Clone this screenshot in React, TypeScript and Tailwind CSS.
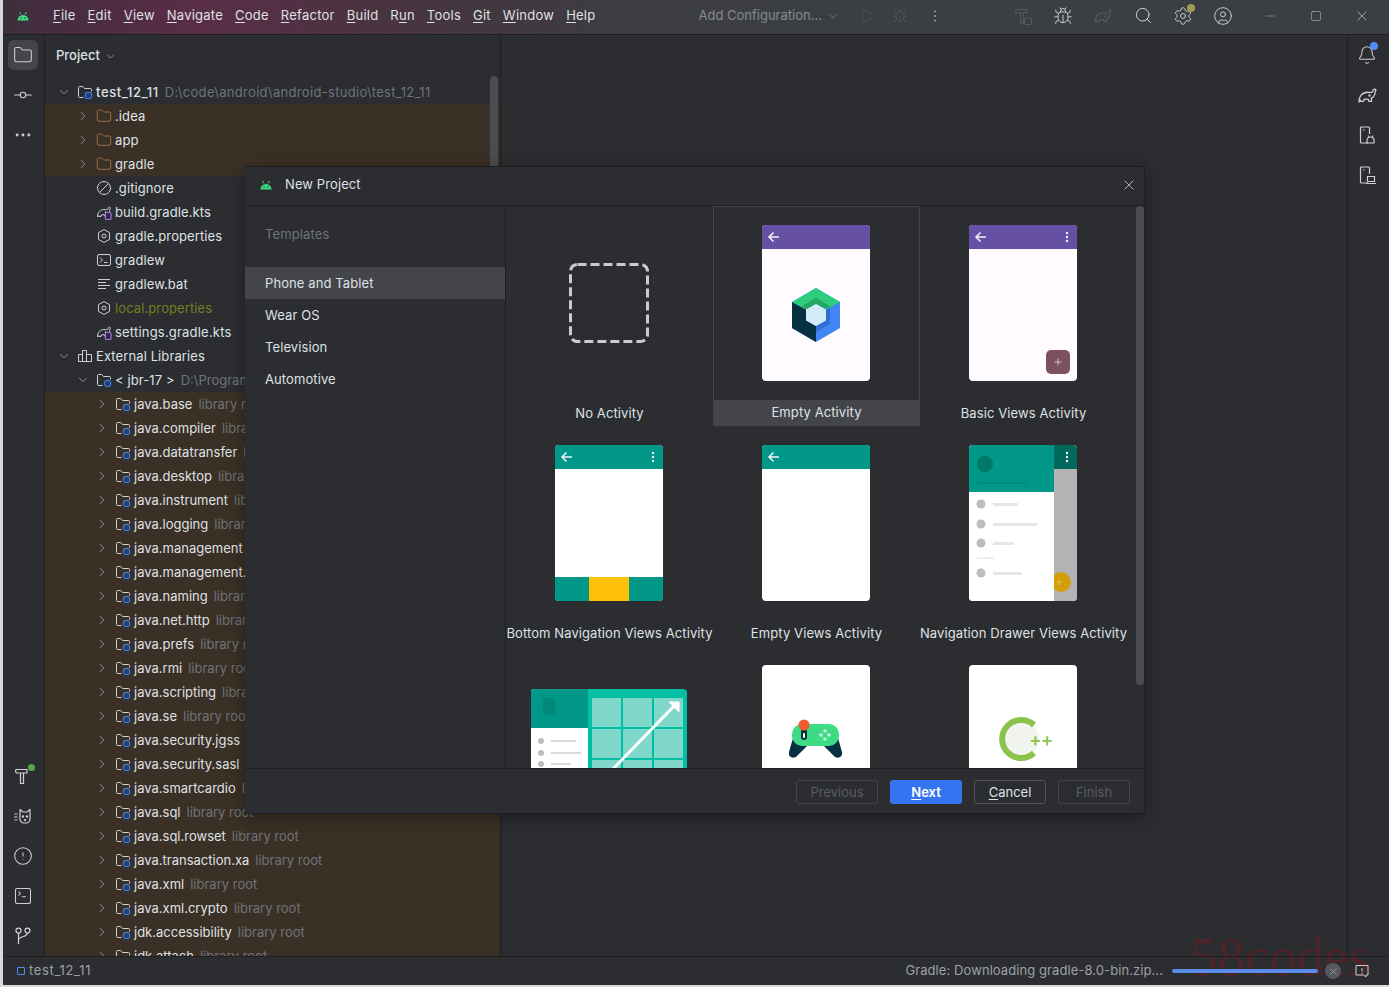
import type { ReactNode } from 'react';
import {
  Bell,
  Bug,
  ChevronDown,
  ChevronRight,
  CircleAlert,
  CircleUser,
  Ellipsis,
  EllipsisVertical,
  Folder,
  GitCommitHorizontal,
  Minus,
  Play,
  Search,
  Settings,
  Square,
  SquareTerminal,
  X,
} from 'lucide-react';

type IconKind =
  | 'module'
  | 'folder'
  | 'ignore'
  | 'gradle'
  | 'props'
  | 'shell'
  | 'text'
  | 'libs'
  | 'lib';

interface TreeRow {
  name: string;
  hint?: string;
  level: number;
  icon: IconKind;
  arrow?: 'open' | 'closed';
  tint?: boolean;
  nameClass?: string;
  hintClass?: string;
}

const lib = (name: string): TreeRow => ({
  name,
  hint: 'library root',
  level: 2,
  icon: 'lib',
  arrow: 'closed',
  tint: true,
  nameClass: 'text-[#dfe1e5]',
});

const plain = 'tracking-[0.1px] text-[#dfe1e5]';

const rows: TreeRow[] = [
  {
    name: 'test_12_11',
    hint: 'D:\\code\\android\\android-studio\\test_12_11',
    level: 0,
    icon: 'module',
    arrow: 'open',
    nameClass: 'font-medium tracking-[0.6px] text-[#dfe1e5]',
    hintClass: 'tracking-[0.32px]',
  },
  { name: '.idea', level: 1, icon: 'folder', arrow: 'closed', tint: true, nameClass: plain },
  { name: 'app', level: 1, icon: 'folder', arrow: 'closed', tint: true, nameClass: plain },
  { name: 'gradle', level: 1, icon: 'folder', arrow: 'closed', tint: true, nameClass: plain },
  { name: '.gitignore', level: 1, icon: 'ignore', nameClass: plain },
  { name: 'build.gradle.kts', level: 1, icon: 'gradle', nameClass: plain },
  { name: 'gradle.properties', level: 1, icon: 'props', nameClass: plain },
  { name: 'gradlew', level: 1, icon: 'shell', nameClass: plain },
  { name: 'gradlew.bat', level: 1, icon: 'text', nameClass: plain },
  { name: 'local.properties', level: 1, icon: 'props', nameClass: 'tracking-[0.1px] text-[#737f22]' },
  { name: 'settings.gradle.kts', level: 1, icon: 'gradle', nameClass: 'tracking-[0.2px] text-[#dfe1e5]' },
  { name: 'External Libraries', level: 0, icon: 'libs', arrow: 'open', nameClass: plain },
  { name: '< jbr-17 >', hint: 'D:\\Program Files\\Android', level: 1, icon: 'lib', arrow: 'open', nameClass: plain },
  ...[
    'java.base',
    'java.compiler',
    'java.datatransfer',
    'java.desktop',
    'java.instrument',
    'java.logging',
    'java.management',
    'java.management.rmi',
    'java.naming',
    'java.net.http',
    'java.prefs',
    'java.rmi',
    'java.scripting',
    'java.se',
    'java.security.jgss',
    'java.security.sasl',
    'java.smartcardio',
    'java.sql',
    'java.sql.rowset',
    'java.transaction.xa',
    'java.xml',
    'java.xml.crypto',
    'jdk.accessibility',
    'jdk.attach',
  ].map(lib),
];

const menu = [
  ['', 'F', 'ile'],
  ['', 'E', 'dit'],
  ['', 'V', 'iew'],
  ['', 'N', 'avigate'],
  ['', 'C', 'ode'],
  ['', 'R', 'efactor'],
  ['', 'B', 'uild'],
  ['R', 'u', 'n'],
  ['', 'T', 'ools'],
  ['', 'G', 'it'],
  ['', 'W', 'indow'],
  ['', 'H', 'elp'],
];

const sidebarItems = ['Phone and Tablet', 'Wear OS', 'Television', 'Automotive'];

function AndroidLogo() {
  return (
    <svg width="14" height="12" viewBox="0 0 14 12">
      <path d="M1.5 10.5a5.5 5.500 0 0 1 11 0z" fill="#3ddc84" />
      <path d="M3.5 2l1.4 2.4M10.5 2L9.1 4.4" stroke="#3ddc84" strokeWidth="1" />
      <circle cx="5" cy="8" r=".7" fill="#2b2d30" />
      <circle cx="9" cy="8" r=".7" fill="#2b2d30" />
    </svg>
  );
}

function GradleShape({ size = 16, stroke = '#ced0d6', badge }: { size?: number; stroke?: string; badge?: boolean }) {
  return (
    <svg width={size} height={size} viewBox="0 0 16 16" fill="none" stroke={stroke} strokeWidth="1" strokeLinejoin="round">
      <path d="M1.500 13C1.200 9 4 5.500 8 5.500c1.500 0 2.500.5 3.500 0 .8-.5.5-2 1.700-2.300 1.100-.2 1.600 1 .8 1.600-.3 2.700-1.500 4.700-3 5.200v2.500H9l-.5-1.700h-3L5 12.500H3l-.2-1z" />
      <circle cx="9.500" cy="8" r=".4" fill={stroke} />
      {badge && <rect x="9.500" y="8.500" width="5.500" height="7" rx="1" fill="#2e2840" stroke="#a571e6" strokeWidth="1.200" />}
    </svg>
  );
}

function TreeIcon({ kind, tint }: { kind: IconKind; tint?: boolean }) {
  const line = '#ced0d6';
  if (kind === 'folder') {
    return <Folder size={16} strokeWidth={1.1} color="#b5835f" />;
  }
  if (kind === 'module' || kind === 'lib') {
    return (
      <svg width="16" height="16" viewBox="0 0 16 16" fill="none">
        <path d="M1.500 12.500v-9a1 1 0 0 1 1-1h3.300l1.700 2h6a1 1 0 0 1 1 1v2M1.500 12.500a1 1 0 0 0 1 1h4" stroke={tint ? '#d5d2cc' : line} />
        {kind === 'module' ? (
          <rect x="8.500" y="8.500" width="6" height="6" rx="1" fill="#23406e" stroke="#3f79e8" strokeWidth="1.200" />
        ) : (
          <circle cx="11.500" cy="11.500" r="3.200" fill="#23406e" stroke="#3f79e8" strokeWidth="1.200" />
        )}
      </svg>
    );
  }
  if (kind === 'ignore') {
    return (
      <svg width="16" height="16" viewBox="0 0 16 16" fill="none" stroke={line}>
        <circle cx="8" cy="8" r="6.500" />
        <path d="M3.500 12.500l9-9" />
      </svg>
    );
  }
  if (kind === 'gradle') {
    return <GradleShape badge />;
  }
  if (kind === 'props') {
    return (
      <svg width="16" height="16" viewBox="0 0 16 16" fill="none" stroke={line}>
        <path d="M8 1.500l5.500 3.200v6.600L8 14.500l-5.500-3.200V4.700z" />
        <circle cx="8" cy="8" r="2" />
      </svg>
    );
  }
  if (kind === 'shell') {
    return (
      <svg width="16" height="16" viewBox="0 0 16 16" fill="none" stroke={line}>
        <rect x="1.500" y="2.500" width="13" height="11" rx="1.500" />
        <path d="M4 5.500L6.500 8 4 10.500M8 10.500h3.500" />
      </svg>
    );
  }
  if (kind === 'text') {
    return (
      <svg width="16" height="16" viewBox="0 0 16 16" fill="none" stroke={line}>
        <path d="M2 3.500h12M2 6.500h8M2 9.500h12M2 12.500h8" />
      </svg>
    );
  }
  return (
    <svg width="16" height="16" viewBox="0 0 16 16" fill="none" stroke={line}>
      <path d="M1.500 6.500h4v7h-4zM5.500 2.500h4v11h-4zM9.500 6.500h5v7h-5z" />
    </svg>
  );
}

function Row({ row }: { row: TreeRow }) {
  const pad = row.level === 0 ? 'pl-[12px]' : row.level === 1 ? 'pl-[31px]' : 'pl-[50px]';
  return (
    <div className={`flex h-6 shrink-0 items-center whitespace-nowrap ${pad} ${row.tint ? 'bg-[#3b3025]' : ''}`}>
      <span className="flex w-[14px] shrink-0 justify-center text-[#b4b8bf]">
        {row.arrow === 'open' && <ChevronDown size={14} strokeWidth={1.25} />}
        {row.arrow === 'closed' && <ChevronRight size={14} strokeWidth={1.25} />}
      </span>
      <span className="ml-[6px] mr-[3px] w-4 shrink-0">
        <TreeIcon kind={row.icon} tint={row.tint} />
      </span>
      <span className={`pt-[2px] ${row.nameClass}`}>{row.name}</span>
      {row.hint && <span className={`ml-[6px] pt-[2px] text-[#6f737a] ${row.hintClass ?? ''}`}>{row.hint}</span>}
    </div>
  );
}

function StripeButton({ active, children }: { active?: boolean; children: ReactNode }) {
  return (
    <div className={`flex h-[30px] w-[30px] items-center justify-center rounded-[6px] text-[#ced0d6] ${active ? 'bg-[#43454a]' : ''}`}>
      {children}
    </div>
  );
}

function HammerIcon({ dim }: { dim?: boolean }) {
  return (
    <svg width="20" height="20" viewBox="0 0 20 20" fill="none" stroke={dim ? '#55585d' : '#ced0d6'} strokeWidth="1.200">
      <path d="M3 3.500h11v3.500H3.500L2.500 5.500zM7.500 7v10.500h3V7" />
      {dim && <rect x="11.500" y="12" width="7" height="6.500" rx="1.500" />}
    </svg>
  );
}

function LogcatIcon() {
  return (
    <svg width="20" height="20" viewBox="0 0 20 20" fill="none" stroke="#ced0d6" strokeWidth="1.200" strokeLinejoin="round">
      <path d="M7 3.500l3 2.500h4l3-2.500V13a4 4 0 0 1-4 4h-2a4 4 0 0 1-4-4z" />
      <path d="M1.500 8h3M1 11h3.500M1.500 14h3" />
      <circle cx="10" cy="10.500" r=".6" fill="#ced0d6" />
      <circle cx="14" cy="10.500" r=".6" fill="#ced0d6" />
      <path d="M11 13.500l1 1 1-1" />
    </svg>
  );
}

function LeftStripe() {
  return (
    <div className="flex w-[42px] shrink-0 flex-col items-center border-r border-[#1e1f22] pr-[2px] pt-[5px]">
      <div className="flex flex-col gap-[10px]">
        <StripeButton active>
          <Folder size={20} strokeWidth={1.25} />
        </StripeButton>
        <StripeButton>
          <GitCommitHorizontal size={22} strokeWidth={1.25} />
        </StripeButton>
        <StripeButton>
          <Ellipsis size={20} strokeWidth={1.5} />
        </StripeButton>
      </div>
      <div className="mt-auto flex flex-col gap-[10px] pb-[5px]">
        <StripeButton>
          <span className="relative">
            <HammerIcon />
            <span className="absolute right-[-2px] top-[-2px] h-[7px] w-[7px] rounded-full bg-[#57a64a]" />
          </span>
        </StripeButton>
        <StripeButton>
          <LogcatIcon />
        </StripeButton>
        <StripeButton>
          <CircleAlert size={20} strokeWidth={1.25} />
        </StripeButton>
        <StripeButton>
          <SquareTerminal size={20} strokeWidth={1.25} />
        </StripeButton>
        <StripeButton>
          <svg width="20" height="20" viewBox="0 0 20 20" fill="none" stroke="#ced0d6" strokeWidth="1.250">
            <circle cx="5.500" cy="4.500" r="2.500" />
            <circle cx="14.500" cy="4.500" r="2.500" />
            <path d="M5.500 7v11M14.500 7c0 4-9 3.500-9 7" />
          </svg>
        </StripeButton>
      </div>
    </div>
  );
}

function PhoneTool({ kind }: { kind: 'android' | 'laptop' }) {
  return (
    <svg width="20" height="20" viewBox="0 0 20 20" fill="none" stroke="#ced0d6" strokeWidth="1.200">
      <path d="M11 18H4.500a1 1 0 0 1-1-1V3a1 1 0 0 1 1-1h7a1 1 0 0 1 1 1v6" />
      <path d="M6 5h1.500" />
      {kind === 'android' ? (
        <path d="M10 18v-2.500a3.500 3.500 0 0 1 7 0V18zM11 10.500l1 1.500M16 10.500l-1 1.500" />
      ) : (
        <path d="M10.500 11.500h7v5h-7zM9 18.500h10" />
      )}
    </svg>
  );
}

function RightStripe() {
  return (
    <div className="flex w-[42px] shrink-0 flex-col items-center gap-[10px] border-l border-[#1e1f22] pr-[3px] pt-[5px]">
      <StripeButton>
        <span className="relative">
          <Bell size={20} strokeWidth={1.25} />
          <span className="absolute right-[-1px] top-[-3px] h-[8px] w-[8px] rounded-full bg-[#548af7]" />
        </span>
      </StripeButton>
      <StripeButton>
        <GradleShape size={21} />
      </StripeButton>
      <StripeButton>
        <PhoneTool kind="android" />
      </StripeButton>
      <StripeButton>
        <PhoneTool kind="laptop" />
      </StripeButton>
    </div>
  );
}

function TitleBar() {
  const cell = 'flex w-10 justify-center';
  return (
    <div className="flex h-[35px] shrink-0 items-center border-b border-[#1e1f22] bg-[linear-gradient(90deg,#3d2f3b_0%,#4f2c42_8%,#5a2d47_14%,#46353f_30%,#3c3d40_45%,#3c3f41_60%)] pb-[3px] text-[13px]">
      <span className="ml-[13px] flex w-[14px] justify-center">
        <AndroidLogo />
      </span>
      <nav className="ml-[23px] flex gap-[12px] tracking-[0.24px] text-[#dfe1e5]">
        {menu.map(([a, m, b]) => (
          <span key={m + b}>
            {a}
            <span className="underline underline-offset-2">{m}</span>
            {b}
          </span>
        ))}
      </nav>
      <span className="ml-[103px] text-[#868a91]">Add Configuration...</span>
      <ChevronDown size={14} strokeWidth={1.25} className="ml-[4px] text-[#868a91]" />
      <Play size={16} strokeWidth={1} className="ml-[19px] text-[#55585d]" />
      <Bug size={16} strokeWidth={1} className="ml-[17px] text-[#55585d]" />
      <EllipsisVertical size={16} strokeWidth={1.5} className="ml-[19px] text-[#9da0a8]" />
      <div className="ml-auto flex items-center">
        <span className={cell}>
          <HammerIcon dim />
        </span>
        <span className={cell}>
          <Bug size={20} strokeWidth={1.1} className="text-[#ced0d6]" />
        </span>
        <span className={cell}>
          <GradleShape size={20} stroke="#55585d" />
        </span>
        <span className={cell}>
          <Search size={19} strokeWidth={1.25} className="text-[#ced0d6]" />
        </span>
        <span className={`${cell} relative`}>
          <Settings size={20} strokeWidth={1.1} className="text-[#ced0d6]" />
          <span className="absolute right-[8px] top-[-2px] h-2 w-2 rounded-full bg-[#a09a5a]" />
        </span>
        <span className={cell}>
          <CircleUser size={20} strokeWidth={1.1} className="text-[#ced0d6]" />
        </span>
        <span className="ml-[4px] flex w-[46px] justify-center">
          <Minus size={14} strokeWidth={1} className="text-[#9da0a8]" />
        </span>
        <span className="flex w-[46px] justify-center">
          <Square size={12} strokeWidth={1} className="text-[#ced0d6]" />
        </span>
        <span className="mr-[4px] flex w-[46px] justify-center">
          <X size={16} strokeWidth={1} className="text-[#ced0d6]" />
        </span>
      </div>
    </div>
  );
}

function ProjectPanel() {
  return (
    <div className="relative flex w-[456px] shrink-0 flex-col overflow-hidden border-r border-[#1e1f22] text-[13px]">
      <div className="flex h-10 shrink-0 items-center gap-[4px] pl-[11px] pt-[2px] font-medium text-[#dfe1e5]">
        Project
        <ChevronDown size={13} strokeWidth={1.25} className="text-[#b4b8bf]" />
      </div>
      <div className="mt-[5px] flex flex-col">
        {rows.map((r) => (
          <Row key={r.name} row={r} />
        ))}
      </div>
      <div className="absolute left-[445px] top-[41px] h-[200px] w-2 rounded-[4px] bg-[#4b4d50]" />
    </div>
  );
}

function PhoneFrame({ bar, dots, body = '#ffffff', children }: { bar?: string; dots?: boolean; body?: string; children?: ReactNode }) {
  return (
    <svg width="108" height="156" viewBox="0 0 108 156" className="block rounded-[4px]">
      <rect width="108" height="156" fill={body} />
      {bar && (
        <>
          <rect width="108" height="24" fill={bar} />
          <path d="M17 12H7M11.500 7.500L7 12l4.500 4.500" stroke="#f2f2f7" strokeWidth="1.500" fill="none" />
          {dots && (
            <g fill="#f2f2f7">
              <circle cx="98" cy="8" r="1.200" />
              <circle cx="98" cy="12" r="1.200" />
              <circle cx="98" cy="16" r="1.200" />
            </g>
          )}
        </>
      )}
      {children}
    </svg>
  );
}

function NoActivityArt() {
  return (
    <svg width="108" height="156" viewBox="0 0 108 156" className="block">
      <rect x="15.500" y="39.500" width="77" height="77" rx="7" fill="none" stroke="#c9cbd0" strokeWidth="3" strokeDasharray="9 4" />
    </svg>
  );
}

function ComposeArt() {
  return (
    <PhoneFrame bar="#6650a4" body="#fffbfe">
      <g transform="translate(30 63)">
        <path d="M24 0l24 14v26L24 54 0 40V14z" fill="#4285f4" />
        <path d="M0 14l14 7.500v11L24 38v16L0 40z" fill="#073042" />
        <path d="M24 0l24 14-14 7.500L24 16l-10 5.500L0 14z" fill="#2fce7e" />
        <path d="M24 10l14 8-4 3.500L24 16l-10 5.500-4-3.500z" fill="#23a765" />
        <path d="M24 38l10-5.500v-11l4-2V36l-14 8z" fill="#2f6fd6" />
        <path d="M24 16l10 5.500v11L24 38l-10-5.500v-11z" fill="#d4ecf7" />
      </g>
    </PhoneFrame>
  );
}

function BasicArt() {
  return (
    <PhoneFrame bar="#6650a4" dots body="#fffbfe">
      <rect x="77" y="125" width="24" height="24" rx="5" fill="#7d5260" />
      <path d="M89 133.500v7M85.500 137h7" stroke="#e6d5da" strokeWidth=".8" />
    </PhoneFrame>
  );
}

function BottomNavArt() {
  return (
    <PhoneFrame bar="#009688" dots>
      <rect y="132" width="108" height="24" fill="#009688" />
      <rect x="34" y="132" width="40" height="24" fill="#ffc107" />
    </PhoneFrame>
  );
}

function DrawerArt() {
  return (
    <PhoneFrame bar="#00695c" dots>
      <rect x="85" y="24" width="23" height="132" fill="#b3b3b3" />
      <circle cx="92" cy="137" r="10" fill="#d29f0a" />
      <path d="M90 134v6M87 137h6" stroke="#e8c75c" strokeWidth=".8" />
      <rect width="85" height="156" fill="#ffffff" />
      <rect width="85" height="47" fill="#009688" />
      <circle cx="16" cy="19" r="8" fill="#00796b" />
      <rect x="8" y="37" width="50" height="2" fill="#00897b" />
      {[59, 79, 98, 128].map((y) => (
        <circle key={y} cx="12" cy={y} r="4.500" fill="#bdbdbd" />
      ))}
      <rect x="24" y="58" width="25" height="3" fill="#e6e6e6" />
      <rect x="24" y="78" width="44" height="3" fill="#e6e6e6" />
      <rect x="24" y="97" width="21" height="3" fill="#e6e6e6" />
      <rect x="8" y="112" width="17" height="2" fill="#eeeeee" />
      <rect x="24" y="127" width="29" height="3" fill="#e6e6e6" />
    </PhoneFrame>
  );
}

function ResponsiveArt() {
  const cols = [61, 92, 123];
  const cellRows = [9, 40, 71];
  return (
    <svg width="156" height="112" viewBox="0 0 156 112" className="mt-[24px] block rounded-t-[4px]">
      <rect width="156" height="112" fill="#00bfa5" />
      {cols.map((x) => cellRows.map((y) => <rect key={`${x}-${y}`} x={x} y={y} width="29" height="29" fill="#80d8cb" />))}
      <rect width="57" height="112" fill="#ffffff" />
      <rect width="57" height="39" fill="#009688" />
      <rect x="12" y="9" width="12" height="17" rx="2" fill="#00897b" />
      {[52, 64, 75].map((y) => (
        <circle key={y} cx="10" cy={y} r="3" fill="#bdbdbd" />
      ))}
      <rect x="20" y="51" width="25" height="2" fill="#d9d9d9" />
      <rect x="20" y="63" width="30" height="2" fill="#d9d9d9" />
      <rect x="20" y="74" width="20" height="2" fill="#d9d9d9" />
      <path d="M80 82L146 14" stroke="#ffffff" strokeWidth="3" />
      <path d="M138 13h10v10z" fill="#ffffff" stroke="#ffffff" />
    </svg>
  );
}

function GameArt() {
  return (
    <PhoneFrame>
      <path d="M33 66L27 87c-1 6 5 7 8 4l11-11h15l11 11c3 3 9 2 8-4l-6-21z" fill="#073042" />
      <rect x="30" y="59" width="47" height="22" rx="10" fill="#3ddc84" />
      <rect x="39" y="63" width="6" height="12" rx="3" fill="#073042" />
      <rect x="41" y="68" width="2" height="5" rx="1" fill="#ffffff" />
      <circle cx="42" cy="60" r="5.500" fill="#f25c2e" />
      <g fill="#c9f3dc">
        <circle cx="63" cy="66" r="1.800" />
        <circle cx="63" cy="74" r="1.800" />
        <circle cx="59" cy="70" r="1.800" />
        <circle cx="67" cy="70" r="1.800" />
      </g>
    </PhoneFrame>
  );
}

function CppArt() {
  return (
    <PhoneFrame>
      <circle cx="52" cy="74" r="18" fill="#f1f3ee" />
      <path d="M65 60a19 19 0 1 0 0 28" fill="none" stroke="#8bc34a" strokeWidth="6" />
      <text x="60" y="81" fontSize="19" fontWeight="500" letterSpacing="-1" fontFamily="Inter, sans-serif" fill="#8bc34a">
        ++
      </text>
    </PhoneFrame>
  );
}

function TemplateCard({ label, selected, children }: { label?: string; selected?: boolean; children: ReactNode }) {
  return (
    <div className={`flex h-[220px] flex-col items-center border pt-[18px] ${selected ? 'border-[#43454a]' : 'border-transparent'}`}>
      <div className="h-[156px] pr-[1px]">{children}</div>
      {label && (
        <div className={`mt-[19px] flex h-[25px] w-full items-center justify-center whitespace-nowrap tracking-[0.1px] ${selected ? 'bg-[#43454a]' : 'pt-[2px]'}`}>
          {label}
        </div>
      )}
    </div>
  );
}

function DialogButton({ label, mnemonic, rest, state }: { label?: string; mnemonic?: string; rest?: string; state: 'off' | 'primary' | 'plain' }) {
  const look =
    state === 'primary'
      ? 'bg-[#3574f0] font-semibold text-white'
      : state === 'plain'
        ? 'border border-[#4e5157] text-[#dfe1e5]'
        : 'border border-[#43454a] text-[#5a5d63]';
  return (
    <div className={`flex h-6 items-center justify-center rounded-[3px] pt-[2px] ${look} ${label === 'Previous' ? 'w-[82px]' : 'w-[72px]'}`}>
      {mnemonic && <span className="underline underline-offset-2">{mnemonic}</span>}
      {rest}
      {label}
    </div>
  );
}

function NewProjectDialog() {
  return (
    <div className="absolute left-[242px] top-[166px] flex h-[648px] w-[900px] flex-col border-b border-r border-t border-[#1e1f22] bg-[#2b2d30] text-[13px] shadow-[0_4px_18px_rgba(0,0,0,0.35)]">
      <div className="flex h-[39px] shrink-0 items-center border-b border-[#1e1f22] pb-[2px] pl-[14px] pr-[7px] text-[#dfe1e5]">
        <AndroidLogo />
        <span className="ml-[12px] tracking-[0.1px]">New Project</span>
        <X size={16} strokeWidth={1.25} className="ml-auto text-[#ced0d6]" />
      </div>
      <div className="relative flex min-h-0 flex-1">
        <aside className="w-[261px] shrink-0 border-r border-[#1e1f22] pt-[18px] text-[#dfe1e5]">
          <div className="mb-[23px] h-5 pl-5 leading-5 tracking-[0.13px] text-[#6f737a]">Templates</div>
          {sidebarItems.map((item, i) => (
            <div key={item} className={`flex h-8 items-center pl-5 pt-[2px] tracking-[0.1px] ${i === 0 ? 'bg-[#43454a]' : ''}`}>
              {item}
            </div>
          ))}
        </aside>
        <div className="min-w-0 flex-1 overflow-hidden text-[#dfe1e5]">
          <div className="grid w-[621px] grid-cols-3">
            <TemplateCard label="No Activity">
              <NoActivityArt />
            </TemplateCard>
            <TemplateCard label="Empty Activity" selected>
              <ComposeArt />
            </TemplateCard>
            <TemplateCard label="Basic Views Activity">
              <BasicArt />
            </TemplateCard>
            <TemplateCard label="Bottom Navigation Views Activity">
              <BottomNavArt />
            </TemplateCard>
            <TemplateCard label="Empty Views Activity">
              <PhoneFrame bar="#009688" />
            </TemplateCard>
            <TemplateCard label="Navigation Drawer Views Activity">
              <DrawerArt />
            </TemplateCard>
            <TemplateCard>
              <ResponsiveArt />
            </TemplateCard>
            <TemplateCard>
              <GameArt />
            </TemplateCard>
            <TemplateCard>
              <CppArt />
            </TemplateCard>
          </div>
        </div>
        <div className="absolute left-[891px] top-0 h-[479px] w-2 rounded-[4px] bg-[#4b4d50]" />
      </div>
      <div className="flex h-[45px] shrink-0 justify-end gap-3 border-t border-[#1e1f22] pr-[14px] pt-[11px]">
        <DialogButton label="Previous" state="off" />
        <DialogButton mnemonic="N" rest="ext" state="primary" />
        <DialogButton mnemonic="C" rest="ancel" state="plain" />
        <DialogButton label="Finish" state="off" />
      </div>
    </div>
  );
}

function StatusBar() {
  return (
    <div className="relative flex h-[29px] shrink-0 items-center border-t border-[#1e1f22] pl-[14px] text-[13px] text-[#9da0a8]">
      <span className="h-2 w-2 rounded-[1px] border border-[#548af7]" />
      <span className="ml-[4px] tracking-[0.65px]">test_12_11</span>
      <span className="ml-auto tracking-[0.08px]">Gradle: Downloading gradle-8.0-bin.zip...</span>
      <span className="ml-[9px] h-1 w-[146px] rounded-full bg-[#5a8de8]" />
      <span className="ml-[7px] flex h-4 w-4 items-center justify-center rounded-full bg-[#55585d]">
        <X size={11} strokeWidth={1.5} className="text-[#bfa3a3]" />
      </span>
      <span className="ml-[13px] mr-[19px] flex">
        <svg width="16" height="16" viewBox="0 0 16 16" fill="none" stroke="#ced0d6">
          <path d="M2 2.500h12v9.500h-2v2l-2.500-2H2z" />
          <path d="M8 5v3.500M8 9.800v1" />
        </svg>
      </span>
    </div>
  );
}

export default function App() {
  return (
    <div className="h-[987px] w-[1389px] overflow-hidden bg-[#d9d9d9] pb-[2px] pl-[3px] font-['Inter',sans-serif]">
      <div className="relative flex h-full flex-col overflow-hidden bg-[#2b2d30]">
        <TitleBar />
        <div className="flex min-h-0 flex-1">
          <LeftStripe />
          <ProjectPanel />
          <div className="min-w-0 flex-1" />
          <RightStripe />
        </div>
        {/* watermark sits under the status bar's content */}
        <div className="pointer-events-none absolute left-[1187px] top-[929px] font-['Liberation_Serif',serif] text-[55px] leading-[55px] text-[#4c2429]">
          58codes
        </div>
        <StatusBar />
        <NewProjectDialog />
      </div>
    </div>
  );
}
